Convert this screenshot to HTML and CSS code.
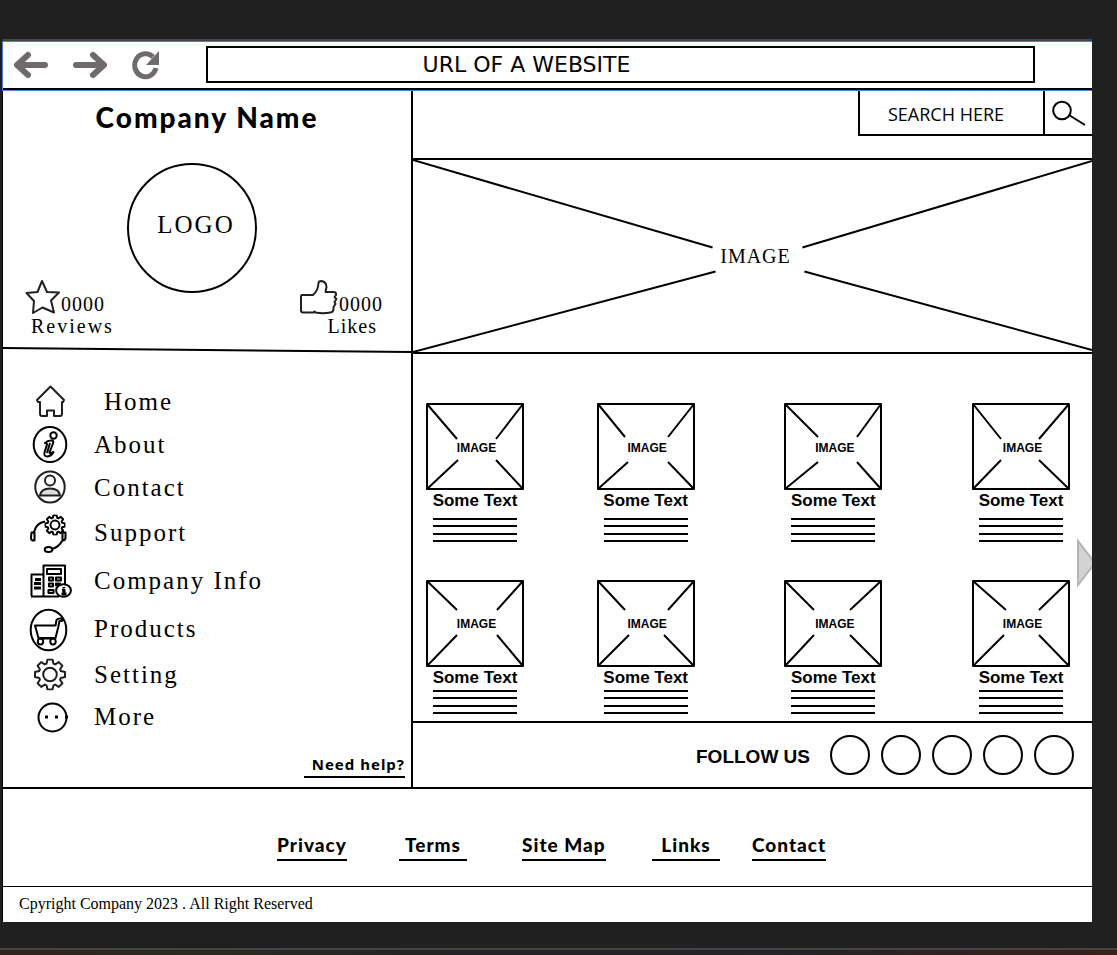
FILE: index.html
```html
<!DOCTYPE html>
<html lang="en">
<head>
<meta charset="utf-8">
<meta name="viewport" content="width=device-width, initial-scale=1">
<title>Company Name</title>
<link rel="stylesheet" href="styles.css">
</head>
<body>
<svg class="defs" aria-hidden="true">
  <symbol id="gear" viewBox="-16 -16 32 32">
    <path d="M-3.5-10.8L-2.5-15H2.5L3.5-10.8 5.2-10.1 8.8-12.4 12.4-8.8 10.1-5.2 10.8-3.5 15-2.5V2.5L10.8 3.5 10.1 5.2 12.4 8.8 8.8 12.4 5.2 10.1 3.5 10.8 2.5 15H-2.5L-3.5 10.8-5.2 10.1-8.8 12.4-12.4 8.8-10.1 5.2-10.8 3.5-15 2.5V-2.5L-10.8-3.5-10.1-5.2-12.4-8.8-8.8-12.4-5.2-10.1Z"/>
    <circle r="6.8"/>
  </symbol>
</svg>
<div class="artboard">
  <header class="toolbar">
    <button class="tool" aria-label="Back"><svg width="36" height="28" viewBox="0 0 36 28"><path class="arrow" d="M15 4L4 14l11 10M5 14h27"/></svg></button>
    <button class="tool" aria-label="Forward"><svg width="36" height="28" viewBox="0 0 36 28"><path class="arrow" d="M21 4l11 10-11 10M31 14H4"/></svg></button>
    <button class="tool" aria-label="Reload"><svg width="30" height="30" viewBox="0 0 30 30"><path class="reload" d="M22 7A10.800 11.500 0 1 0 25 18"/><path class="reload-tip" d="M28 1v14H15z"/></svg></button>
    <input class="url" type="text" aria-label="Address" value="URL OF A WEBSITE">
  </header>

  <div class="main">
    <aside class="side">
      <section class="profile">
        <h1 class="brand">Company Name</h1>
        <div class="profile-row">
          <div class="stat">
            <div class="stat-top">
              <svg width="36" height="36" viewBox="0 0 36 36"><path class="ink soft" d="M17 2l5 11 12 .5-8 8 3 12-11.500-5L8 34l1-12L1.500 14l11-1z"/></svg>
              <span>0000</span>
            </div>
            <div class="stat-label">Reviews</div>
          </div>
          <div class="logo">LOGO</div>
          <div class="stat likes">
            <div class="stat-top">
              <svg width="40" height="36" viewBox="0 0 40 36"><path class="ink soft" d="M3 16h11q5-4 5.500-12 0-2 3-2 5 1 5 6l-1 5h8q3 0 2.500 3l-1.500 2 2 2-2 3 1 2-2 3v2q0 3-3 3.500-8 1.500-15 0l-1-1-1 1H4q-2 0-2-2V18q0-2 1-2z"/></svg>
              <span>0000</span>
            </div>
            <div class="stat-label">Likes</div>
          </div>
        </div>
        <svg class="divider" viewBox="0 0 408 6" preserveAspectRatio="none"><path class="ink" d="M0 1L408 5"/></svg>
      </section>

      <nav class="menu" aria-label="Main">
        <a class="item item-first" href="#"><svg width="44" height="42" viewBox="28 381 44 42"><path class="ink soft" d="M50.500 386.500L37 400l1 2h2v11.500q0 2.500 2 2.500h5v-5.500h7v5.500h6q2 0 2-2.500V402h1l1-2z"/></svg>Home</a>
        <a class="item" href="#"><svg width="44" height="43" viewBox="28 423 44 43"><g class="ink"><ellipse cx="50" cy="444.500" rx="16.300" ry="17.600"/><circle cx="53.500" cy="435.500" r="3.200"/><path d="M45 443q3-3 7-2.500 2 .5 1 3l-3.500 9q0 1.500 4-.5-2 4-6 4.500-4 0-3-4l2.500-8q0-1.500-2-1.500zM50 443l-3 10"/></g></svg>About</a>
        <a class="item" href="#"><svg width="44" height="43" viewBox="28 466 44 43"><g class="ink soft"><ellipse cx="50" cy="487" rx="14.700" ry="15.500"/><circle cx="50" cy="480.500" r="5"/><path class="shade" d="M40 495.500q1-7 10-7t10 7z"/></g></svg>Contact</a>
        <a class="item" href="#"><svg width="44" height="47" viewBox="28 509 44 47"><g class="ink"><use class="gear-bold" href="#gear" x="44.500" y="514.500" width="21" height="21"/><path d="M34 532q2-9 11-10.500M31.500 532.500h3v8h-1.500q-2 0-2-3zM62.500 532.500h3v5q0 3-3 3zM63 532l-1-3M62 541q-3 6-10 8"/><ellipse cx="48.500" cy="549.500" rx="3.800" ry="2.500"/></g></svg>Support</a>
        <a class="item" href="#"><svg width="44" height="49" viewBox="28 556 44 49"><g class="ink"><path d="M43.500 596V565.500H65v19M31 596.500h28M31.500 596V574.500h12M47 569h14v5H47z"/><path class="thick" d="M35 579.500h6M34 583.500h7M34 588h7"/><path class="shade" d="M49 577.500h4v3h-4zM56 577.500h5v3h-5zM49 583.500h4v3h-4zM56 583.500h4v2h-4zM48.500 590h5v3h-5z"/><ellipse class="paper" cx="63.500" cy="590.500" rx="7.400" ry="6.300"/><path class="thick" d="M64 587v1M62 590h2v4M61.500 594h5"/></g></svg>Company Info</a>
        <a class="item" href="#"><svg width="44" height="48" viewBox="28 605 44 48"><g class="ink"><ellipse cx="48.500" cy="630" rx="17.800" ry="20.300"/><path d="M35 625.500h20.500l1-5.500q1-2 5.500-1.500v2.500h-2.500l-1.500 7-2.500 10h-17zM38 638.500h17"/><ellipse cx="40.500" cy="641.500" rx="2.700" ry="2.900"/><ellipse cx="53" cy="641.500" rx="2.700" ry="2.900"/></g></svg>Products</a>
        <a class="item" href="#"><svg width="44" height="43" viewBox="28 653 44 43"><g class="ink soft"><use href="#gear" x="34" y="658.500" width="32" height="32"/></g></svg>Setting</a>
        <a class="item" href="#"><svg width="44" height="42" viewBox="28 696 44 42"><g class="ink"><circle cx="52.500" cy="717.500" r="14"/><path class="thick" d="M45 717h3M55 717h3M65 717h3"/></g></svg>More</a>
      </nav>
      <a class="help" href="#">Need help?</a>
    </aside>

    <main class="content">
      <div class="search-row">
        <form class="search">
          <input class="search-input" type="text" aria-label="Search" placeholder="SEARCH HERE">
          <button class="search-button" type="button" aria-label="Search"><svg width="36" height="26" viewBox="0 0 36 26"><g class="ink"><circle cx="11" cy="10.500" r="8.800"/><path d="M18 15l16 10"/></g></svg></button>
        </form>
      </div>

      <div class="hero">
        <svg viewBox="0 0 680 193" preserveAspectRatio="none"><path class="ink" d="M0 0L300 88M680 1L390 88M0 193L303 112M680 191L392 112"/></svg>
        <span>IMAGE</span>
      </div>

      <section class="products">
        <article class="card"><div class="thumb"><svg viewBox="0 0 98 87"><path class="ink" d="M1 1h96v85H1zL31 36M97 1L70 36M1 86L32 57M97 86L70 57"/></svg><span>IMAGE</span></div><h2>Some Text</h2><svg class="lines" viewBox="0 0 84 24"><path class="ink" d="M0 1h84M0 8h84M0 16h84M0 23h84"/></svg></article>
        <article class="card"><div class="thumb"><svg viewBox="0 0 98 87"><path class="ink" d="M1 1h96v85H1zL28 34M97 1L71 34M1 86L31 59M97 86L71 59"/></svg><span>IMAGE</span></div><h2>Some Text</h2><svg class="lines" viewBox="0 0 84 24"><path class="ink" d="M0 1h84M0 8h84M0 16h84M0 23h84"/></svg></article>
        <article class="card"><div class="thumb"><svg viewBox="0 0 98 87"><path class="ink" d="M1 1h96v85H1zL34 34M97 1L73 34M1 86L34 59M97 86L73 59"/></svg><span>IMAGE</span></div><h2>Some Text</h2><svg class="lines" viewBox="0 0 84 24"><path class="ink" d="M0 1h84M0 8h84M0 16h84M0 23h84"/></svg></article>
        <article class="card"><div class="thumb"><svg viewBox="0 0 98 87"><path class="ink" d="M1 1h96v85H1zL29 36M97 1L67 36M1 86L29 57M97 86L67 57"/></svg><span>IMAGE</span></div><h2>Some Text</h2><svg class="lines" viewBox="0 0 84 24"><path class="ink" d="M0 1h84M0 8h84M0 16h84M0 23h84"/></svg></article>
        <article class="card compact"><div class="thumb"><svg viewBox="0 0 98 87"><path class="ink" d="M1 1h96v85H1zL31 30M97 1L71 30M1 86L31 55M97 86L71 55"/></svg><span>IMAGE</span></div><h2>Some Text</h2><svg class="lines" viewBox="0 0 84 24"><path class="ink" d="M0 1h84M0 8h84M0 16h84M0 23h84"/></svg></article>
        <article class="card compact"><div class="thumb"><svg viewBox="0 0 98 87"><path class="ink" d="M1 1h96v85H1zL28 30M97 1L71 30M1 86L32 55M97 86L67 55"/></svg><span>IMAGE</span></div><h2>Some Text</h2><svg class="lines" viewBox="0 0 84 24"><path class="ink" d="M0 1h84M0 8h84M0 16h84M0 23h84"/></svg></article>
        <article class="card compact"><div class="thumb"><svg viewBox="0 0 98 87"><path class="ink" d="M1 1h96v85H1zL30 30M97 1L66 30M1 86L30 55M97 86L66 55"/></svg><span>IMAGE</span></div><h2>Some Text</h2><svg class="lines" viewBox="0 0 84 24"><path class="ink" d="M0 1h84M0 8h84M0 16h84M0 23h84"/></svg></article>
        <article class="card compact"><div class="thumb"><svg viewBox="0 0 98 87"><path class="ink" d="M1 1h96v85H1zL34 30M97 1L67 30M1 86L32 55M97 86L67 55"/></svg><span>IMAGE</span></div><h2>Some Text</h2><svg class="lines" viewBox="0 0 84 24"><path class="ink" d="M0 1h84M0 8h84M0 16h84M0 23h84"/></svg></article>
        <button class="next" aria-label="Next"><svg width="15" height="50" viewBox="0 0 15 50"><path d="M1 3v44l17-22z"/></svg></button>
      </section>

      <section class="follow">
        <span>FOLLOW US</span>
        <div class="socials">
          <a href="#" aria-label="Social profile 1"></a>
          <a href="#" aria-label="Social profile 2"></a>
          <a href="#" aria-label="Social profile 3"></a>
          <a href="#" aria-label="Social profile 4"></a>
          <a href="#" aria-label="Social profile 5"></a>
        </div>
      </section>
    </main>
  </div>

  <footer>
    <nav class="links" aria-label="Footer">
      <a href="#">Privacy</a>
      <a href="#">Terms</a>
      <a href="#">Site Map</a>
      <a href="#">Links</a>
      <a href="#">Contact</a>
    </nav>
    <p class="copyright">Cpyright Company 2023 . All Right Reserved</p>
  </footer>
</div>
<div class="desk-edge"></div>
</body>
</html>
```
FILE: styles.css
```css
* { box-sizing: border-box; }
body {
  margin: 0;
  min-height: 100vh;
  display: flex;
  flex-direction: column;
  padding-top: 39px;
  background: #202020;
  color: #000;
  font-family: "Liberation Sans", Arial, sans-serif;
}
a { color: inherit; text-decoration: none; }
svg { display: block; }
button { padding: 0; border: 0; background: none; cursor: pointer; }
input { font: inherit; color: inherit; outline: 0; border-radius: 0; }
.defs { position: absolute; width: 0; height: 0; }

.ink { fill: none; stroke: #000; stroke-width: 2; stroke-linejoin: round; vector-effect: non-scaling-stroke; }
.soft { stroke: #231f20; }
.shade { fill: #ddd; }
.paper { fill: #fff; }
.thick { stroke-width: 3; }
.gear-bold { stroke-width: 3; }

.artboard {
  margin: 0 25px 0 2px;
  border-top: 2px solid #444;
  border-left: 1px solid #000;
  background: #fff;
}

/* browser bar */
.toolbar {
  display: flex;
  align-items: center;
  height: 50px;
  padding: 0 57px 3px 10px;
  border-top: 1px solid #4a7de8;
  border-bottom: 1px solid #4a7de8;
  border-left: 1px solid #4a7de8;
  margin-left: -1px;
  box-shadow: inset 0 -2px #000;
}
.tool { margin-right: 23px; }
.tool:nth-child(3) { margin-right: 45px; }
.arrow { fill: none; stroke: #6f6b6a; stroke-width: 6; stroke-linecap: round; stroke-linejoin: round; }
.reload { fill: none; stroke: #6f6b6a; stroke-width: 5; }
.reload-tip { fill: #6f6b6a; }
.url {
  flex: 1;
  min-width: 0;
  height: 37px;
  padding: 0 0 0 21%;
  border: 2px solid #000;
  background: #fff;
  font: 22px "DejaVu Sans", sans-serif;
}

.main {
  display: grid;
  grid-template-columns: 408fr 681fr;
  border-bottom: 2px solid #000;
}

/* left column */
.side { display: flex; flex-direction: column; }
.profile { padding-top: 10px; }
.brand {
  margin: 0;
  text-align: center;
  font: 900 28px/32px Lato, sans-serif;
  letter-spacing: 2px;
}
.profile-row {
  display: flex;
  align-items: flex-end;
  height: 204px;
  padding: 0 28px 0 22px;
}
.stat { width: 102px; font: 20px/22px "Liberation Serif", serif; letter-spacing: 1px; }
.stat-top { display: flex; align-items: flex-end; }
.stat-label { padding-left: 6px; letter-spacing: 2px; }
.likes { width: auto; margin-left: auto; }
.likes .stat-label { padding: 0 6px 0 0; text-align: right; letter-spacing: 1px; }
.logo {
  display: flex;
  align-items: center;
  justify-content: center;
  align-self: flex-start;
  width: 130px;
  height: 130px;
  margin-top: 30px;
  padding: 0 0 6px 8px;
  border: 2px solid #000;
  border-radius: 50%;
  font: 25px "Liberation Serif", serif;
  letter-spacing: 2px;
}
.divider { width: 100%; height: 6px; margin-top: 10px; }
.menu { padding: 28px 0 0 25px; }
.item {
  display: flex;
  align-items: center;
  gap: 22px;
  font: 25px "Liberation Serif", serif;
  letter-spacing: 2px;
}
.item-first { gap: 32px; }
.item svg { flex: none; }
.help {
  align-self: flex-end;
  margin: 16px 6px 0 0;
  padding: 0 0 2px 8px;
  border-bottom: 2px solid #000;
  font: bold 15px/20px "Noto Sans", sans-serif;
  letter-spacing: 1px;
}

/* right column */
.content { min-width: 0; border-left: 2px solid #000; }
.search-row { display: flex; justify-content: flex-end; height: 67px; }
.search { display: flex; width: 234px; height: 45px; border: solid #000; border-width: 0 0 2px 2px; }
.search-input {
  flex: 1;
  min-width: 0;
  padding: 2px 0 0 28px;
  border: 0;
  background: none;
  font: 18px "Open Sans", sans-serif;
}
.search-input::placeholder { color: #000; opacity: 1; }
.search-button { display: flex; align-items: center; width: 49px; padding-left: 6px; border-left: 2px solid #000; }

.hero { display: grid; height: 196px; border: solid #000; border-width: 2px 0; }
.hero svg { grid-area: 1 / 1; width: 100%; height: 192px; }
.hero span {
  grid-area: 1 / 1;
  place-self: center;
  padding-left: 6px;
  font: 20px "Liberation Serif", serif;
  letter-spacing: 1px;
}

.products {
  position: relative;
  display: grid;
  grid-template-columns: 171fr 188fr 188fr 98fr;
  row-gap: 38px;
  padding: 49px 22px 7px 13px;
}
.card { width: 98px; }
.thumb { display: grid; }
.thumb svg { grid-area: 1 / 1; width: 98px; height: 87px; }
.thumb span { grid-area: 1 / 1; place-self: center; padding: 2px 0 0 3px; font: bold 12px/14px "Liberation Sans", sans-serif; }
.compact .thumb span { padding-top: 0; }
.card h2 { margin: 0; text-align: center; font: bold 17px/22px "Liberation Sans", sans-serif; }
.lines { width: 84px; height: 24px; margin: 6px auto 0; }
.compact .lines { margin-top: 1px; }
.next { position: absolute; right: 0; top: 184px; }
.next path { fill: #d1d3d4; stroke: #b3b5b7; stroke-width: 2; }

.follow {
  display: flex;
  align-items: center;
  justify-content: flex-end;
  gap: 20px;
  height: 66px;
  padding-right: 18px;
  border-top: 2px solid #000;
  font: bold 19px "Liberation Sans", sans-serif;
}
.follow span { padding-top: 4px; }
.socials { display: flex; gap: 11px; }
.socials a { width: 40px; height: 40px; border: 2px solid #000; border-radius: 50%; }

/* footer */
.links {
  display: grid;
  grid-template-columns: 122px 123px 130px 100px 80px;
  justify-items: start;
  padding: 44px 0 25px 274px;
  font: 900 19px/24px Lato, sans-serif;
  letter-spacing: 1px;
}
.links a { min-width: 68px; padding: 0 0 2px; border-bottom: 2px solid #000; text-align: center; }
.copyright {
  margin: 0;
  padding: 6px 16px 7px;
  border-top: 1px solid #000;
  font: 16px/22px "Liberation Serif", serif;
}
.desk-edge { height: 7px; margin-top: auto; border-top: 2px solid #444; background: linear-gradient(90deg, #30221a, #292a1f 18%, #222228 40%, #24222a 70%, #3a2018); }
```
